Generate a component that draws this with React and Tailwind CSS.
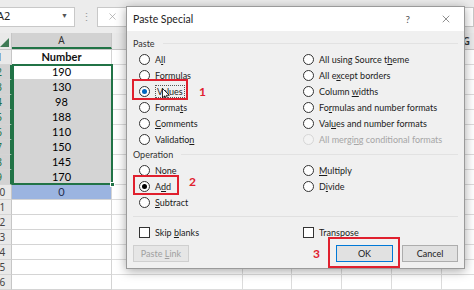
import { X } from 'lucide-react'

const ui = { fontFamily: '"Noto Sans", "Open Sans", sans-serif' }
const dlg = { fontFamily: 'Lato, "Liberation Sans", sans-serif' }
const cellFont = { fontFamily: 'Lato, "Liberation Sans", sans-serif' }

// text with one underlined access-key letter
const Label = ({ text, u, disabled }) => (
  <span className={`whitespace-nowrap ${disabled ? 'text-[#a6a6a6]' : 'text-[#1b1b1b]'}`}>
    {text.slice(0, u)}
    <span className="underline underline-offset-[1px]">{text[u]}</span>
    {text.slice(u + 1)}
  </span>
)

const Radio = ({ checked, dot = 'bg-black', disabled }) => (
  <span
    className={`w-[11px] h-[11px] shrink-0 rounded-full border flex items-center justify-center ${
      disabled ? 'border-[#d6d6d6] bg-[#f3f3f3]' : 'border-[#333] bg-white'
    }`}
  >
    {checked && <span className={`w-[5px] h-[5px] rounded-full ${dot}`} />}
  </span>
)

const Option = ({ text, u, checked, dot, disabled, indent, focus }) => (
  <div className={`h-4 flex items-center gap-[5px] whitespace-nowrap ${indent ? 'pl-[6px]' : ''}`}>
    <Radio checked={checked} dot={dot} disabled={disabled} />
    <span className={focus ? 'border border-dotted border-[#555] px-px py-px' : ''}>
      <Label text={text} u={u} disabled={disabled} />
    </span>
  </div>
)

const Check = ({ text, u, indent }) => (
  <div className={`h-4 flex items-center gap-[5px] ${indent ? 'pl-[6px]' : ''}`}>
    <span className="w-[11px] h-[11px] border border-[#333] bg-white shrink-0" />
    <Label text={text} u={u} />
  </div>
)

const SectionLabel = ({ children, h = 'h-4' }) => (
  <div className={`${h} flex items-center gap-2 text-[#333]`}>
    <span>{children}</span>
    <span className="flex-1 h-px bg-[#e2e2e2]" />
  </div>
)

const pasteOpts = [
  [{ text: 'All', u: 1 }, { text: 'All using Source theme', u: 18 }],
  [{ text: 'Formulas', u: 0 }, { text: 'All except borders', u: 5 }],
  [{ text: 'Values', u: 1, checked: true, dot: 'bg-[#0067c0]', focus: true }, { text: 'Column widths', u: 7 }],
  [{ text: 'Formats', u: 5 }, { text: 'Formulas and number formats', u: 2 }],
  [{ text: 'Comments', u: 0 }, { text: 'Values and number formats', u: 3 }],
  [{ text: 'Validation', u: 9 }, { text: 'All merging conditional formats', u: 9, disabled: true }],
]

const opOpts = [
  [{ text: 'None', u: 1 }, { text: 'Multiply', u: 0 }],
  [{ text: 'Add', u: 1, checked: true }, { text: 'Divide', u: 1 }],
  [{ text: 'Subtract', u: 0 }, null],
]

const numbers = [190, 130, 98, 188, 110, 150, 145, 170]
const cols = [
  { w: 'w-[131px]' },
  { w: 'w-[49px]' },
  { w: 'w-[50px]' },
  { w: 'w-[50px]' },
  { w: 'w-[50px]' },
  { w: 'w-[50px]', name: 'G' },
]

const Row = ({ n, selected, aClass = 'bg-white', text }) => (
  <div className="h-[15px] flex">
    <div
      className={`w-6 -ml-3 shrink-0 flex items-center justify-center text-[10px] border-b border-[#d4d4d4] ${
        selected ? 'bg-[#d2d2d2] text-[#217346] border-r-2 border-r-[#217346]' : 'bg-[#e9e9e9] text-[#444] border-r border-r-[#c6c6c6]'
      }`}
      style={ui}
    >
      {n}
    </div>
    <div
      className={`w-[100px] shrink-0 flex items-center justify-center text-[11px] border-b border-r border-[#d4d4d4] ${aClass}`}
      style={cellFont}
    >
      {text}
    </div>
    {cols.map((c, i) => (
      <div key={i} className={`${c.w} shrink-0 border-b border-r border-[#dcdcdc]`} />
    ))}
  </div>
)

export default function App() {
  return (
    <div className="w-[474px] h-[290px] relative overflow-hidden bg-white" style={ui}>
      {/* formula bar */}
      <div className="h-[33px] bg-[#ececec] flex items-center">
        <div className="w-[76px] h-[20px] bg-white border border-[#c8c8c8] border-l-0 flex items-center justify-between pr-[6px] -ml-px">
          <span className="text-[11px] text-[#222] -ml-[2px]">A2</span>
          <span className="text-[7px] text-[#555]">▼</span>
        </div>
        <span className="w-[22px] text-center text-[#9a9a9a] text-[11px] leading-none">⋮</span>
        <div className="flex-1 h-[20px] bg-white border border-[#c8c8c8] flex items-center pl-[9px]">
          <X size={11} strokeWidth={1.4} className="text-[#999]" />
        </div>
      </div>

      {/* column headers */}
      <div className="h-[17px] flex bg-[#e9e9e9] border-b border-[#c6c6c6]">
        <div className="w-3 shrink-0 relative border-r border-[#c6c6c6]">
          <svg className="absolute right-[2px] bottom-[2px]" width="9" height="9" viewBox="0 0 9 9">
            <path d="M9 0 L9 9 L0 9 Z" fill="#3f7a55" />
          </svg>
        </div>
        <div className="w-[100px] shrink-0 bg-[#d2d2d2] border-b-2 border-[#217346] border-r border-r-[#c6c6c6] flex items-center justify-center text-[10px] text-[#333]">
          A
        </div>
        {cols.map((c, i) => (
          <div key={i} className={`${c.w} shrink-0 border-r border-[#c6c6c6] flex items-center justify-center text-[10px] text-[#333] font-semibold`}>
            {c.name}
          </div>
        ))}
      </div>

      {/* grid rows */}
      <Row n={1} text={<span className="font-bold text-[#111]">Number</span>} />
      {numbers.map((v, i) => (
        <Row key={v + '-' + i} n={i + 2} selected aClass={i === 0 ? 'bg-white' : 'bg-[#d4d4d4]'} text={v} />
      ))}
      <Row n={10} aClass="bg-[#9bb4e0] text-[#1f2d4d]" text={0} />
      {[11, 12, 13, 14, 15, 16].map((n) => (
        <Row key={n} n={n} text="" />
      ))}

      {/* selection outline A2:A9 */}
      <div className="absolute left-[12px] top-[64px] w-[101px] h-[121px] border-2 border-[#217346] pointer-events-none">
        <span className="absolute -right-[4px] -bottom-[4px] w-[5px] h-[5px] bg-[#217346] border border-white" />
      </div>

      {/* Paste Special dialog */}
      <div
        className="absolute left-[126px] top-[6px] w-[339px] border border-[#9a9a9a] shadow-[0_2px_10px_rgba(0,0,0,0.35)] text-[9px] leading-none"
        style={dlg}
      >
        <div className="h-[24px] bg-white flex items-center pl-[6px] pr-[12px]">
          <span className="text-[10.5px] text-[#222]">Paste Special</span>
          <span className="ml-auto text-[10px] text-[#555] mr-[30px]">?</span>
          <X size={12} strokeWidth={1.2} className="text-[#444]" />
        </div>
        <div className="bg-[#f0f0f0] px-[6px] pt-[4px] pb-[6px]">
          <SectionLabel>Paste</SectionLabel>
          {pasteOpts.map(([l, r], i) => (
            <div key={i} className="grid grid-cols-[170px_1fr]">
              <Option {...l} indent />
              <Option {...r} />
            </div>
          ))}
          <SectionLabel h="h-[15px]">Operation</SectionLabel>
          {opOpts.map(([l, r], i) => (
            <div key={i} className="grid grid-cols-[170px_1fr]">
              <Option {...l} indent />
              {r ? <Option {...r} /> : <div />}
            </div>
          ))}
          <div className="mt-[6px] h-px bg-[#e0e0e0]" />
          <div className="mt-[7px] grid grid-cols-[170px_1fr]">
            <Check text="Skip blanks" u={5} indent />
            <Check text="Transpose" u={8} />
          </div>
          <div className="mt-[5px] h-[17px] flex">
            <button className="w-[56px] h-full bg-[#e6e6e6] border border-[#cfcfcf] text-[#a0a0a0] text-[9px]">
              Paste <span className="underline">L</span>ink
            </button>
            <button className="ml-auto w-[57px] h-full bg-[#e1e1e1] border border-[#0078d7] text-[#1b1b1b] text-[9px]">
              OK
            </button>
            <button className="ml-[9px] w-[56px] h-full bg-[#e1e1e1] border border-[#adadad] text-[#1b1b1b] text-[9px]">
              Cancel
            </button>
          </div>
        </div>
      </div>

      {/* mouse cursor */}
      <svg className="absolute left-[162px] top-[88px]" width="8" height="12" viewBox="0 0 8 12">
        <path d="M0.5 0.5 L0.5 10 L2.8 7.8 L4.4 11.3 L5.8 10.7 L4.3 7.3 L7.3 7.3 Z" fill="white" stroke="black" strokeWidth="0.8" />
      </svg>

      {/* red annotations */}
      <div className="absolute left-[132px] top-[79px] w-[56px] h-[21px] border-2 border-[#e0202e]" />
      <span className="absolute left-[199px] top-[83px] text-[12px] font-bold text-[#e0202e]" style={cellFont}>1</span>
      <div className="absolute left-[133px] top-[175px] w-[46px] h-[20px] border-2 border-[#e0202e]" />
      <span className="absolute left-[189px] top-[173px] text-[12px] font-bold text-[#e0202e]" style={cellFont}>2</span>
      <div className="absolute left-[328px] top-[237px] w-[72px] h-[31px] border-2 border-[#e0202e]" />
      <span className="absolute left-[313px] top-[245px] text-[12px] font-bold text-[#e0202e]" style={cellFont}>3</span>
    </div>
  )
}
